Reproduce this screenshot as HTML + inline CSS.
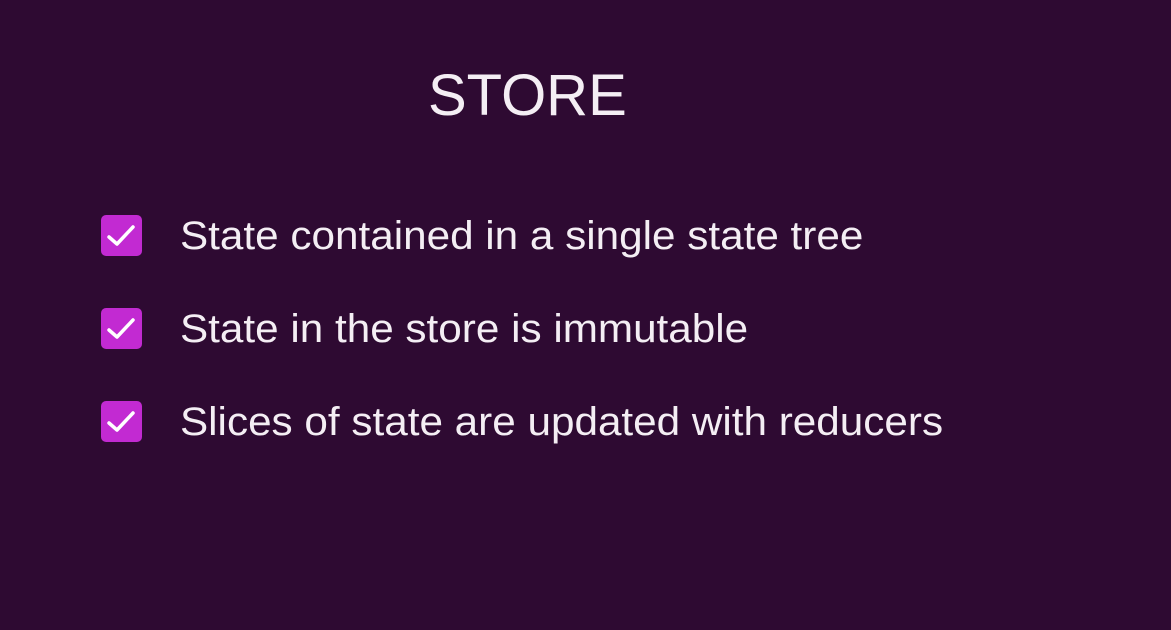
<!DOCTYPE html>
<html><head><style>
html,body{margin:0;padding:0;}
body{width:1171px;height:630px;background:#2e0a32;position:relative;overflow:hidden;font-family:"Liberation Sans",sans-serif;color:#f4eef4;}
.title{position:absolute;left:428px;top:67px;font-size:58px;line-height:58px;white-space:nowrap;transform:scaleX(1.0);transform-origin:left top;}
.row{position:absolute;left:101px;height:42px;}
.cb{position:absolute;left:0;top:0;width:41px;height:41px;border-radius:5px;background:#c22ad2;}
.cb svg{position:absolute;left:0;top:0;}
.t{position:absolute;left:79px;top:-3px;font-size:40px;line-height:48px;white-space:nowrap;transform:scaleX(1.056);transform-origin:left center;}
</style></head><body>
<div class="title">STORE</div>
<div class="row" style="top:215px"><div class="cb"><svg width="41" height="41"><path d="M8 22 L16 29 L32 12" stroke="#fff" stroke-width="3.5" fill="none" stroke-linecap="round" stroke-linejoin="round"/></svg></div><div class="t">State contained in a single state tree</div></div>
<div class="row" style="top:308px"><div class="cb"><svg width="41" height="41"><path d="M8 22 L16 29 L32 12" stroke="#fff" stroke-width="3.5" fill="none" stroke-linecap="round" stroke-linejoin="round"/></svg></div><div class="t">State in the store is immutable</div></div>
<div class="row" style="top:401px"><div class="cb"><svg width="41" height="41"><path d="M8 22 L16 29 L32 12" stroke="#fff" stroke-width="3.5" fill="none" stroke-linecap="round" stroke-linejoin="round"/></svg></div><div class="t">Slices of state are updated with reducers</div></div>
</body></html>
